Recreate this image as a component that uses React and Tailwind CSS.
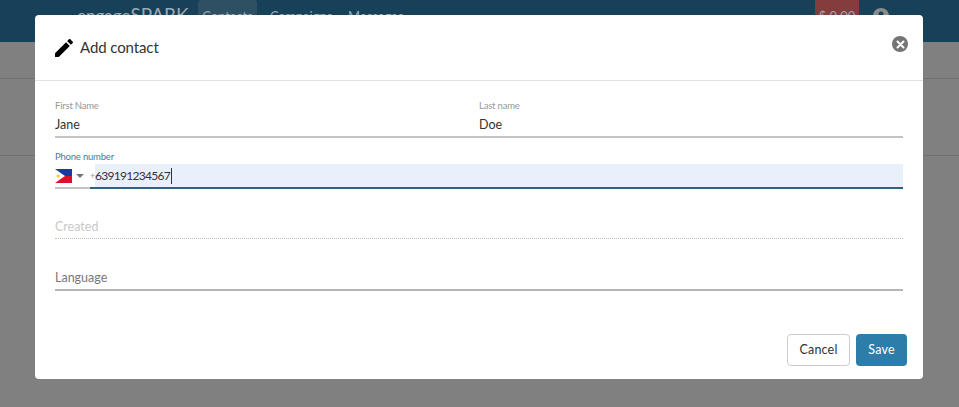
const font = { fontFamily: 'Lato, "Noto Sans", sans-serif' }

const PhFlag = () => (
  <svg width="17" height="14" viewBox="0 0 17 14" className="shrink-0">
    <rect width="17" height="7" fill="#1a3a9c" />
    <rect y="7" width="17" height="7" fill="#d8122a" />
    <path d="M0 0L10 7L0 14Z" fill="#fff" />
    <circle cx="3.2" cy="7" r="1.5" fill="#f5c518" />
  </svg>
)

const Field = ({ label, value }) => (
  <div className="flex-1">
    <div className="text-[9.5px] leading-[12px] tracking-[-0.2px] text-[#999]">{label}</div>
    <div className="mt-[5px] h-[19px] text-[12.5px] leading-[16px] text-[#333]">{value}</div>
  </div>
)

export default function App() {
  return (
    <div className="relative h-[407px] w-[959px] overflow-hidden bg-[#808080]" style={font}>
      {/* page behind the dialog */}
      <header className="flex h-[42px] items-start bg-[#174059] pl-[77px] text-[13px] text-[#9aa9b3]">
        <span className="mt-[5px] w-[121px] whitespace-nowrap text-[17px] leading-[20px]">engage<span className="text-[19px]">SPARK</span></span>
        <span className="h-[42px] w-[59px] rounded-t-[3px] bg-[#2f4f63] pt-[8px] text-center leading-[16px]">Contacts</span>
        <span className="ml-[13px] w-[58px] pt-[8px] leading-[16px]">Campaigns</span>
        <span className="ml-[20px] w-[49px] pt-[8px] leading-[16px]">Messages</span>
        <span className="ml-[418px] h-[42px] w-[44px] bg-[#843c3c] pt-[8px] text-center leading-[16px]">$ 0.00</span>
        <svg width="16" height="16" viewBox="0 0 16 16" className="ml-[14px] mt-[8px]">
          <circle cx="8" cy="8" r="8" fill="#8b8b8b" />
          <circle cx="8" cy="6" r="2.5" fill="#174059" />
        </svg>
      </header>
      <div className="h-[37px] border-b border-[#707070]" />
      <div className="h-[77px] border-b border-[#707070]" />

      {/* dialog */}
      <div className="absolute left-[35px] top-[15px] flex h-[364px] w-[888px] flex-col rounded-[4px] bg-white">
        <div className="flex h-[66px] items-center border-b border-[#e2e2e2] pl-[20px] pr-[15px]">
          <svg width="18" height="18" viewBox="3 3 18 18" className="shrink-0">
            <path d="M3 17.25V21h3.75L17.81 9.94l-3.75-3.75L3 17.25zM20.71 7.04c.39-.39.39-1.02 0-1.41l-2.34-2.34c-.39-.39-1.02-.39-1.41 0l-1.83 1.83 3.75 3.75 1.83-1.83z" fill="#000" />
          </svg>
          <h2 className="ml-[7px] text-[15px] font-normal tracking-[-0.1px] text-[#333]">Add contact</h2>
          <button className="ml-auto mb-[7px] flex h-[16px] w-[16px] items-center justify-center rounded-full bg-[#757575]">
            <svg width="9" height="9" viewBox="0 0 9 9">
              <path d="M1.5 1.5L7.5 7.5M7.5 1.5L1.5 7.5" stroke="#fff" strokeWidth="2" strokeLinecap="round" />
            </svg>
          </button>
        </div>

        <div className="flex flex-1 flex-col px-[20px] pt-[19px]">
          <div className="flex gap-[20px] border-b-2 border-[#c4c4c4]">
            <div className="w-[404px]"><Field label="First Name" value="Jane" /></div>
            <Field label="Last name" value="Doe" />
          </div>

          <div className="mt-[13px] text-[9.5px] leading-[12px] tracking-[-0.2px] text-[#4d7a99]">Phone number</div>
          <div className="mt-[1px] flex h-[25px] items-stretch">
            <div className="flex w-[35px] items-center border-b-2 border-[#c4c4c4]">
              <PhFlag />
              <span className="ml-[4px] h-0 w-0 border-x-[4px] border-t-[4px] border-x-transparent border-t-[#777]" />
            </div>
            <div className="flex flex-1 border-b-2 border-[#2d6283] text-[12px] text-[#333]">
              <span className="flex w-[5px] items-center text-[9px] text-[#999]">+</span>
              <div className="flex flex-1 items-center bg-[#e8f0fb]">
                <span className="tracking-[-0.7px]">639191234567</span>
                <span className="ml-[1px] h-[16px] w-px bg-[#333]" />
              </div>
            </div>
          </div>

          <div className="mt-[29px] h-[21px] border-b border-dotted border-[#bbb] text-[12.5px] leading-[18px] text-[#c8c8c8]">Created</div>
          <div className="mt-[30px] box-content h-[20px] border-b-2 border-[#b5b5b5] text-[12.5px] leading-[18px] text-[#777]">Language</div>
        </div>

        <div className="flex justify-end gap-[6px] pb-[13px] pr-[16px]">
          <button className="h-[32px] w-[63px] rounded-[4px] border border-[#ccc] bg-white text-[12.5px] tracking-[0.2px] text-[#333]">Cancel</button>
          <button className="h-[32px] w-[51px] rounded-[4px] bg-[#2d7dab] text-[12.5px] tracking-[0.2px] text-white">Save</button>
        </div>
      </div>
    </div>
  )
}
